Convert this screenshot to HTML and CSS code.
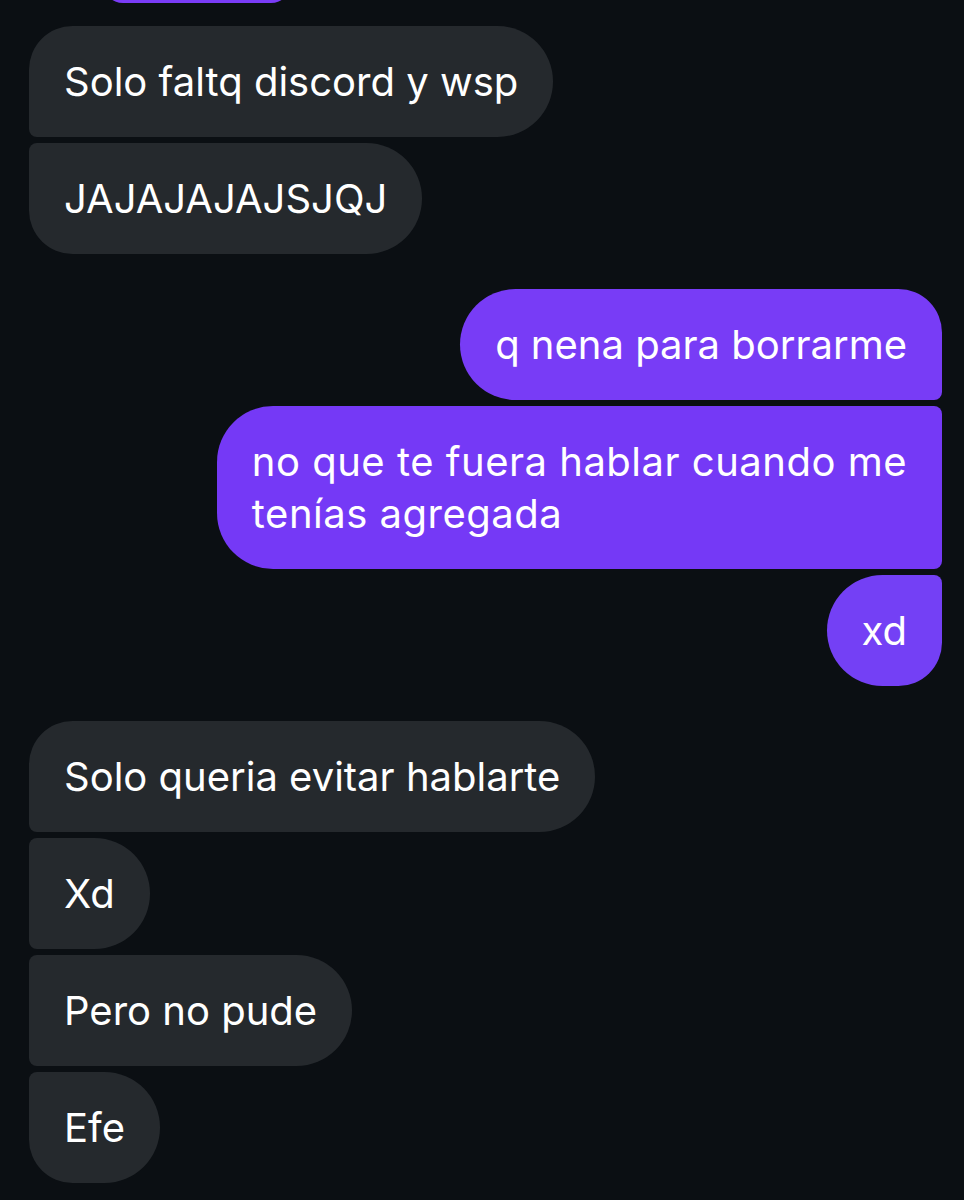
FILE: index.html
```html
<!DOCTYPE html>
<html lang="es">
<head>
<meta charset="utf-8">
<title>Chat</title>
<link rel="stylesheet" href="styles.css">
</head>
<body>
<div class="chat">
  <div class="top-peek"></div>

  <div class="group them">
    <div class="msg first">Solo faltq discord y wsp</div>
    <div class="msg last">JAJAJAJAJSJQJ</div>
  </div>

  <div class="group me">
    <div class="msg first">q nena para borrarme</div>
    <div class="msg mid wide">no que te fuera hablar cuando me<br>tenías agregada</div>
    <div class="msg last">xd</div>
  </div>

  <div class="group them">
    <div class="msg first">Solo queria evitar hablarte</div>
    <div class="msg mid">Xd</div>
    <div class="msg mid">Pero no pude</div>
    <div class="msg last">Efe</div>
  </div>
</div>
</body>
</html>
```

FILE: styles.css
```css
html, body { margin: 0; padding: 0; background: #0b0f13; }
body { font: normal 40px/52px "Inter", "Noto Sans", sans-serif; color: #fff; overflow: hidden; }

.chat { padding: 0 22px 0 29px; display: flex; flex-direction: column; gap: 35px; }

.top-peek {
  width: 188px; height: 40px; margin: -37px 0 -12px 74px;
  background: #7a3cf6; border-radius: 22px;
}

.group { display: flex; flex-direction: column; gap: 6px; }
.group.them { align-items: flex-start; }
.group.me { align-items: flex-end; }

.msg {
  padding: 29.5px 35px;
  border-radius: 56px;
}
.msg.wide { letter-spacing: 0.5px; }

.them .msg { background: #25292d; border-top-left-radius: 8px; border-bottom-left-radius: 8px; }
.them .msg.first { border-top-left-radius: 44px; }
.them .msg.last { border-bottom-left-radius: 44px; }

.me .msg { background: #7539f6; border-top-right-radius: 8px; border-bottom-right-radius: 8px; }
.me .msg.first { border-top-right-radius: 44px; background: #783cf6; }
.me .msg.last { border-bottom-right-radius: 44px; background: #7440f5; }
```
